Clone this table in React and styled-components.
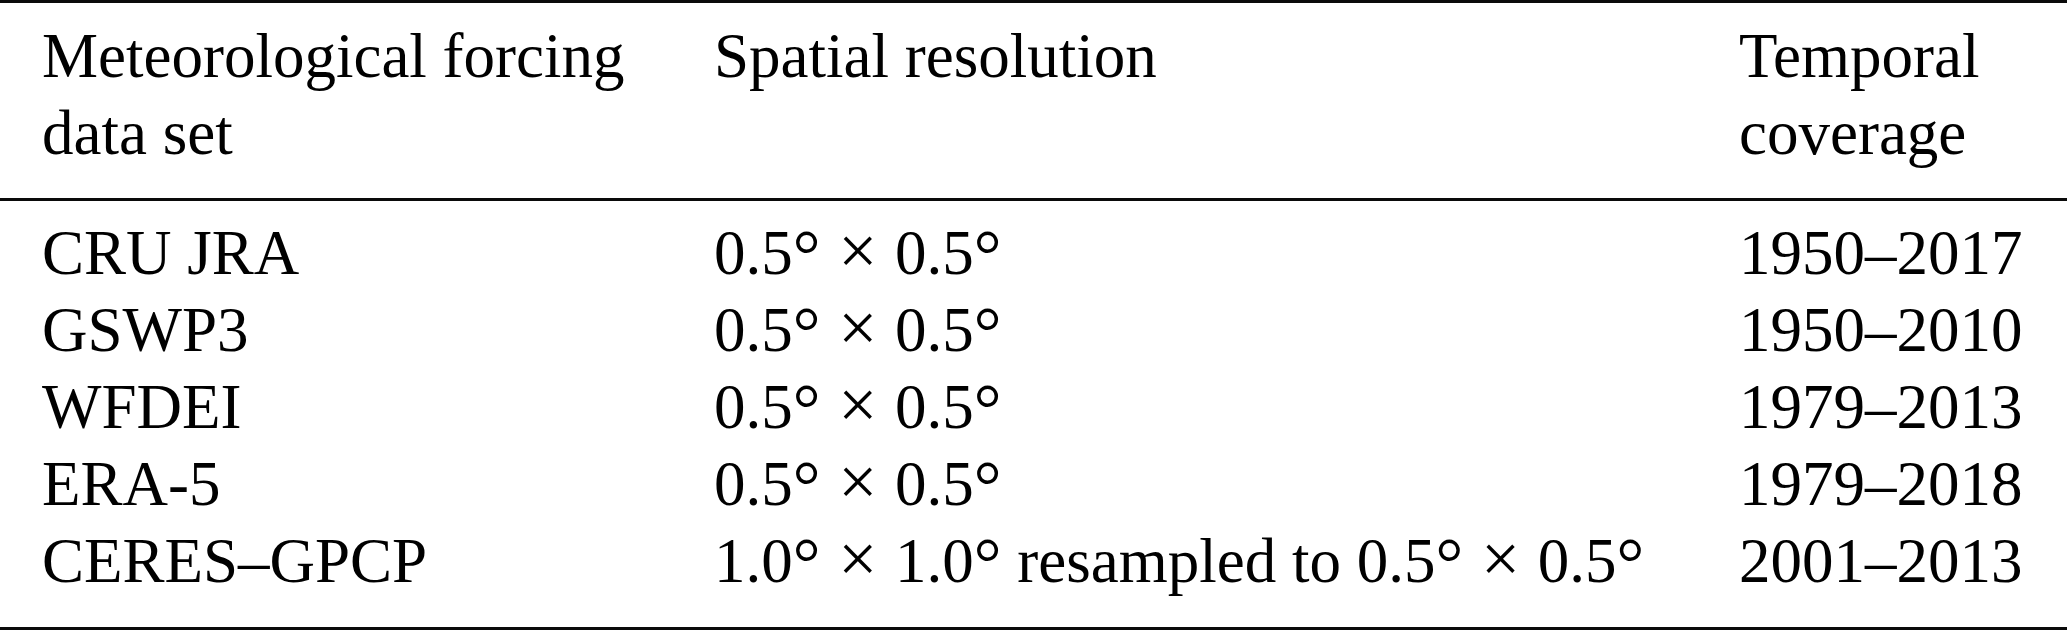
import React from 'react';
import styled, { createGlobalStyle } from 'styled-components';

const columns = '671px 1025px 1fr';
const ruleColor = '#0a0a0a';

const GlobalStyle = createGlobalStyle`
  html, body {
    margin: 0;
    padding: 0;
    background: #ffffff;
  }
  body {
    font-family: "Liberation Serif", "Times New Roman", serif;
    color: #000;
  }
`

const TableStyled = styled.div`
  width: 2067px;
  border-top: 3px solid ${ruleColor};
  border-bottom: 3px solid ${ruleColor};
  font-size: 63px;
  line-height: 77px;
`

const HeadRow = styled.div`
  display: grid;
  grid-template-columns: ${columns};
  padding: 15px 0 26px 0;
  border-bottom: 3px solid ${ruleColor};
`

const Body = styled.div`
  padding: 14px 0 27px 0;
`

const Row = styled.div`
  display: grid;
  grid-template-columns: ${columns};
  height: 77px;
`

const Cell = styled.div`
  padding-left: ${props => props.$pad || 43}px;
  white-space: nowrap;
`

const Deg = styled.span`
  font-size: 1.1em;
  line-height: 0;
  vertical-align: -0.06em;
`

const Times = styled.span`
  font-size: 1.1em;
  line-height: 0;
  margin: 0 2px;
`

const Res = ({ a, b }) => (
  <>
    {a}<Deg>°</Deg> <Times>×</Times> {b}<Deg>°</Deg>
  </>
);

const rows = [
  ['CRU JRA', <Res a="0.5" b="0.5" />, '1950–2017'],
  ['GSWP3', <Res a="0.5" b="0.5" />, '1950–2010'],
  ['WFDEI', <Res a="0.5" b="0.5" />, '1979–2013'],
  ['ERA-5', <Res a="0.5" b="0.5" />, '1979–2018'],
  ['CERES–GPCP', <><Res a="1.0" b="1.0" /> resampled to <Res a="0.5" b="0.5" /></>, '2001–2013'],
];

export default function App() {
  return (
    <>
      <GlobalStyle />
      <TableStyled>
        <HeadRow>
          <Cell $pad={42}>Meteorological forcing<br />data set</Cell>
          <Cell>Spatial resolution</Cell>
          <Cell>Temporal<br />coverage</Cell>
        </HeadRow>
        <Body>
          {rows.map(([name, res, years]) => (
            <Row key={name}>
              <Cell $pad={42}>{name}</Cell>
              <Cell>{res}</Cell>
              <Cell>{years}</Cell>
            </Row>
          ))}
        </Body>
      </TableStyled>
    </>
  );
}
